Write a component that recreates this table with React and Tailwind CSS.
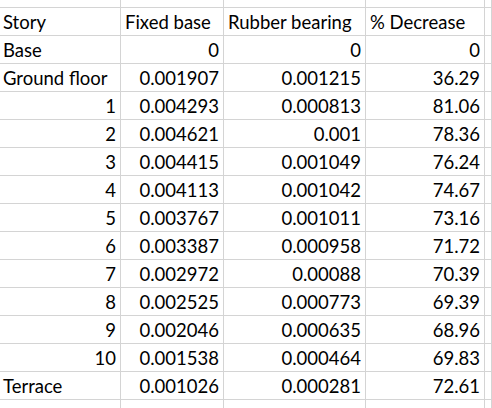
import React from "react";

const rows = [
  ["Base", "0", "0", "0"],
  ["Ground floor", "0.001907", "0.001215", "36.29"],
  ["1", "0.004293", "0.000813", "81.06"],
  ["2", "0.004621", "0.001", "78.36"],
  ["3", "0.004415", "0.001049", "76.24"],
  ["4", "0.004113", "0.001042", "74.67"],
  ["5", "0.003767", "0.001011", "73.16"],
  ["6", "0.003387", "0.000958", "71.72"],
  ["7", "0.002972", "0.00088", "70.39"],
  ["8", "0.002525", "0.000773", "69.39"],
  ["9", "0.002046", "0.000635", "68.96"],
  ["10", "0.001538", "0.000464", "69.83"],
  ["Terrace", "0.001026", "0.000281", "72.61"],
];

const cell = "border-r border-b border-[#d4d4d4] flex items-end pb-[1px] leading-[24px] whitespace-nowrap overflow-visible";

export default function App() {
  return (
    <div
      className="w-[492px] h-[408px] overflow-hidden bg-white text-black text-[18.5px]"
      style={{ fontFamily: "Lato, 'Liberation Sans', sans-serif" }}
    >
      <div className="grid grid-cols-[121px_103px_142px_119px_1fr] auto-rows-[28px] grid-rows-[8px]">
        {[0, 1, 2, 3, 4].map((i) => (
          <div key={"t" + i} className="border-r border-b border-[#d4d4d4] h-[8px]" />
        ))}
        <div className={cell + " pl-[3px]"}>Story</div>
        <div className={cell + " pl-[4px]"}>Fixed base</div>
        <div className={cell + " pl-[4px]"}>Rubber bearing</div>
        <div className={cell + " pl-[4px]"}>% Decrease</div>
        <div className={cell} />
        {rows.map((r, i) => {
          const isNum = /^\d+$/.test(r[0]);
          return (
            <React.Fragment key={i}>
              <div className={cell + (isNum ? " justify-end pr-[4px]" : " pl-[3px]")}>{r[0]}</div>
              <div className={cell + " justify-end pr-[4px]"}>{r[1]}</div>
              <div className={cell + " justify-end pr-[4px]"}>{r[2]}</div>
              <div className={cell + " justify-end pr-[4px]"}>{r[3]}</div>
              <div className={cell} />
            </React.Fragment>
          );
        })}
        {[0, 1, 2, 3, 4].map((i) => (
          <div key={"b" + i} className={cell} />
        ))}
      </div>
    </div>
  );
}
